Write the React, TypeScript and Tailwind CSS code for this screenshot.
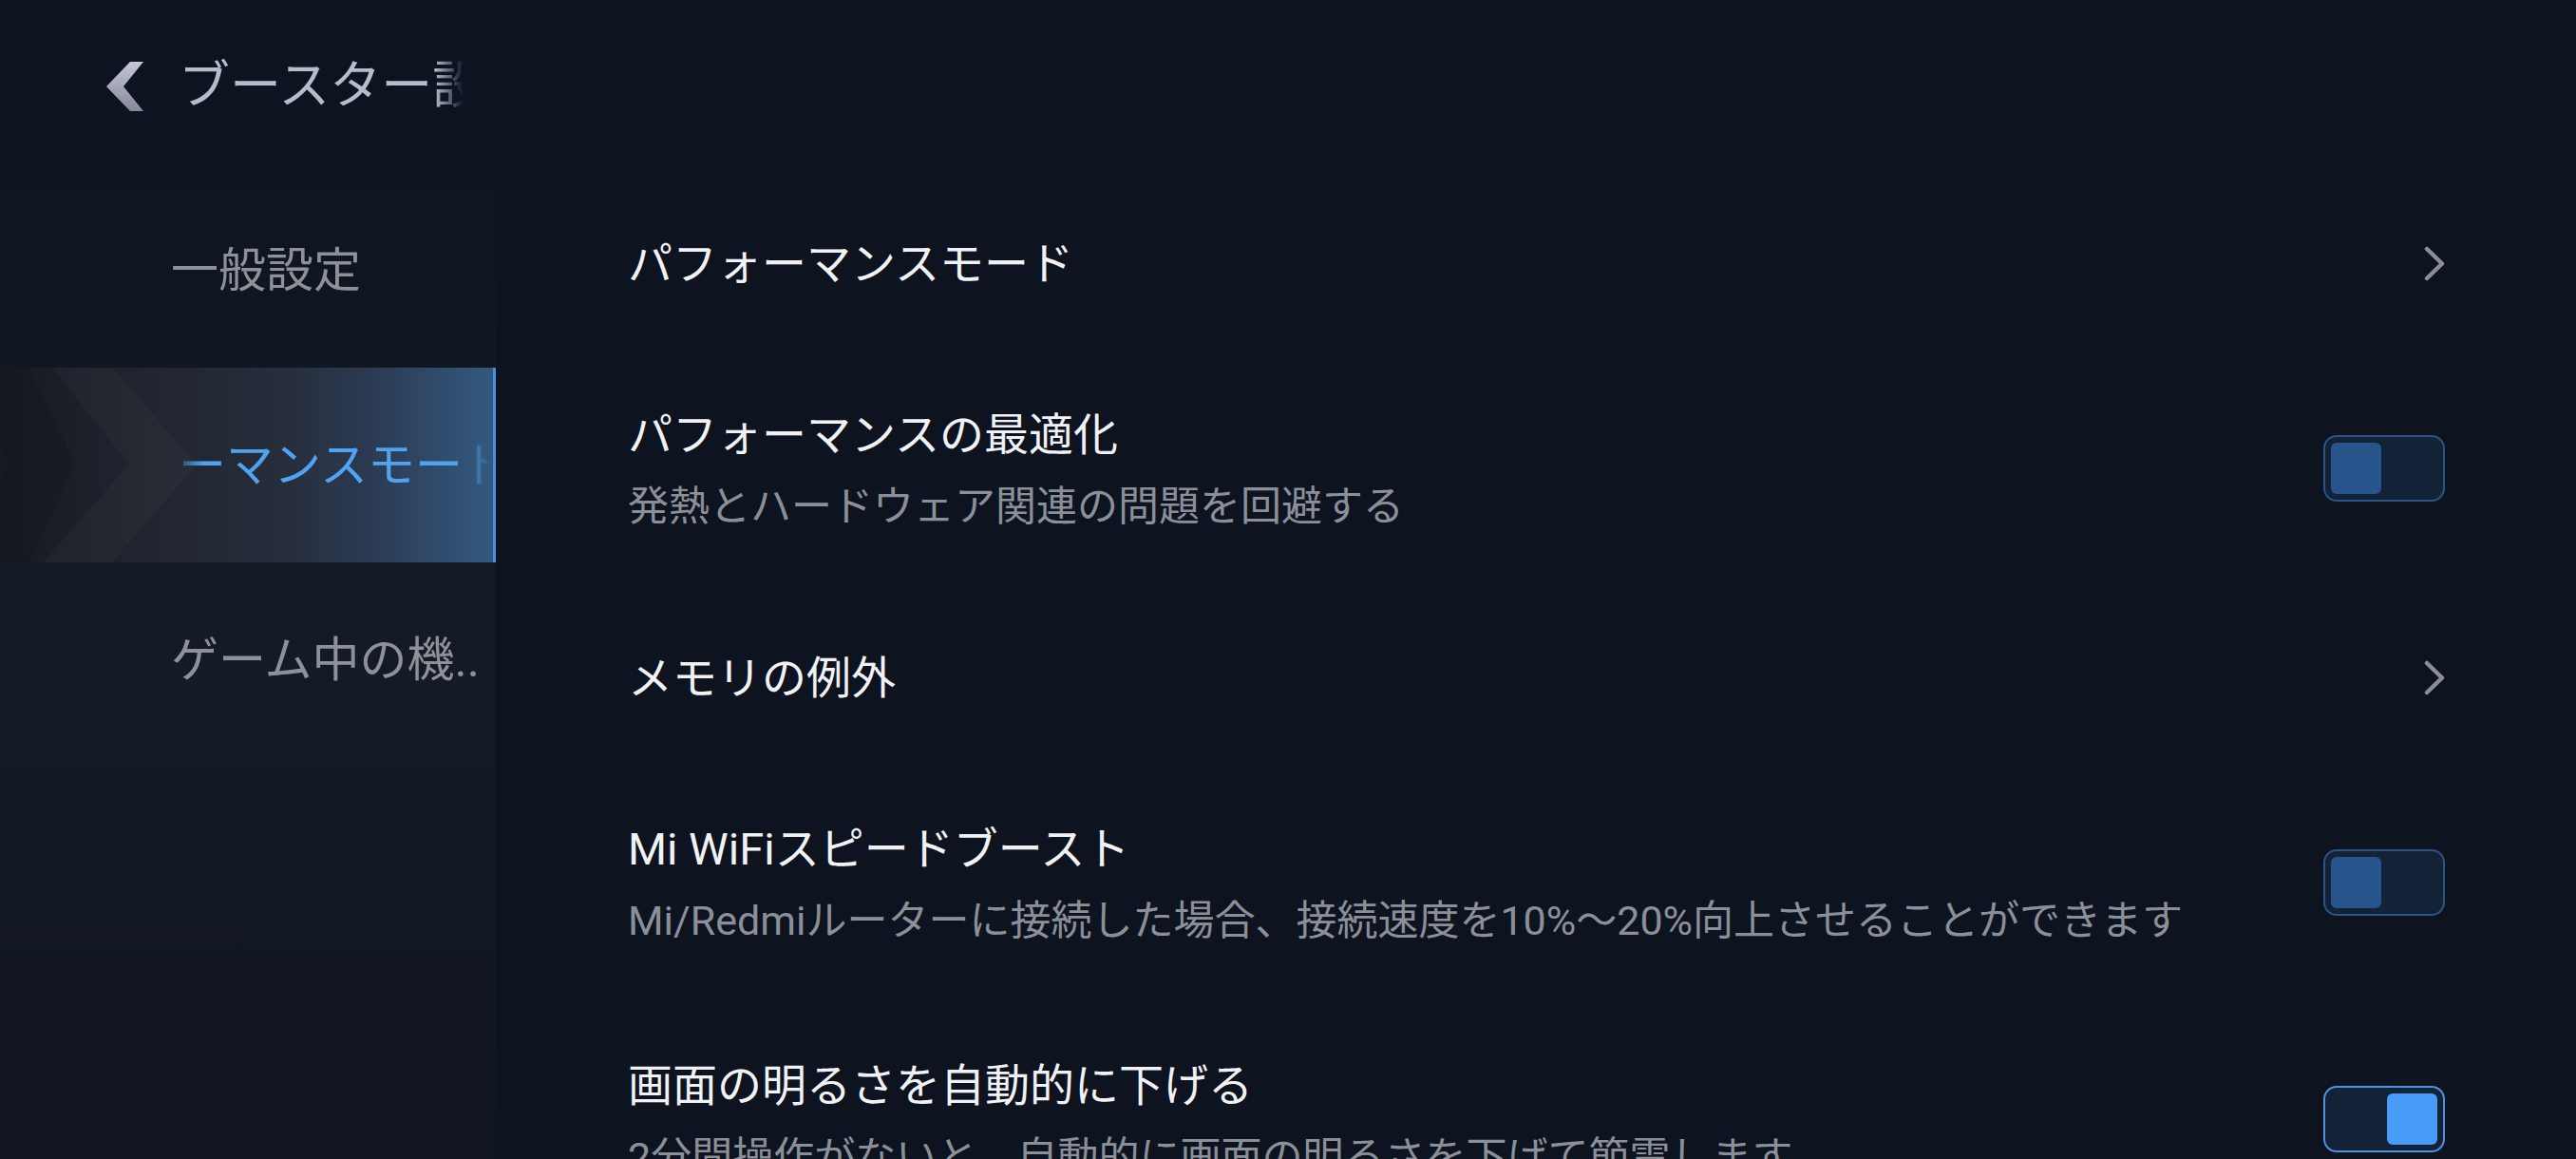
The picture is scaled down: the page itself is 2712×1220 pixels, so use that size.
import React from "react";

const FONT = "[font-family:Roboto,'Noto_Sans_CJK_JP',sans-serif]";

function BackChevron() {
  return (
    <svg width="40" height="52" viewBox="0 0 40 52" className="shrink-0">
      <defs>
        <linearGradient id="bk" x1="0" y1="0" x2="0" y2="1">
          <stop offset="0" stopColor="#c4c7d9" />
          <stop offset="1" stopColor="#848899" />
        </linearGradient>
      </defs>
      <polygon points="25,0 39,0 18,26 39,52 25,52 0,26" fill="url(#bk)" />
    </svg>
  );
}

function RowChevron() {
  return (
    <svg width="22" height="37" viewBox="0 0 22 37" className="shrink-0">
      <path
        d="M3 3 L19 18.5 L3 34"
        fill="none"
        stroke="#8b8e95"
        strokeWidth="4.5"
        strokeLinecap="round"
        strokeLinejoin="round"
      />
    </svg>
  );
}

function Toggle({ on }: { on: boolean }) {
  return (
    <div
      className={
        on
          ? "w-[128px] h-[70px] shrink-0 rounded-[14px] border-2 border-[#4d93dd] bg-[#142238] p-[6px] flex justify-end"
          : "w-[128px] h-[70px] shrink-0 rounded-[14px] border-2 border-[#2b5384] bg-[#142238] p-[6px] flex justify-start"
      }
    >
      <div
        className={
          on
            ? "w-[53px] h-[54px] rounded-[6px] bg-[#469cf7]"
            : "w-[53px] h-[54px] rounded-[6px] bg-[#27548a]"
        }
      />
    </div>
  );
}

function NavRow({ title }: { title: string }) {
  return (
    <div className="h-[187px] shrink-0 flex items-center justify-between">
      <div className="text-[47px] leading-[62px] text-[#f1f2f5] whitespace-nowrap">{title}</div>
      <RowChevron />
    </div>
  );
}

function ToggleRow({ title, sub, on }: { title: string; sub: string; on: boolean }) {
  return (
    <div className="h-[249px] flex items-center justify-between shrink-0">
      <div className="flex flex-col gap-[13px]">
        <div className="text-[47px] leading-[62px] text-[#f1f2f5] whitespace-nowrap">{title}</div>
        <div className="text-[43px] leading-[62px] text-[#8b8f98] whitespace-nowrap">{sub}</div>
      </div>
      <div className="-mt-[6px]">
        <Toggle on={on} />
      </div>
    </div>
  );
}

export default function App() {
  return (
    <div
      className={`w-[2712px] h-[1220px] overflow-hidden bg-[#0e1320] flex ${FONT}`}
    >
      <aside className="w-[522px] shrink-0 flex flex-col">
        <header className="h-[182px] shrink-0 flex items-center pl-[112px] gap-[36px]">
          <BackChevron />
          <div className="w-[300px] overflow-hidden [mask-image:linear-gradient(to_right,black_0,black_270px,transparent_300px)]">
            <span className="block whitespace-nowrap text-[54px] leading-[70px] text-[#b7bbcd]">
              ブースター設定
            </span>
          </div>
        </header>
        <div className="flex-1 flex flex-col bg-gradient-to-b from-[#0f1421] via-[#141a26] to-[#10151f]">
          <div className="h-[205px] shrink-0 flex items-center pl-[180px]">
            <span className="text-[50px] leading-[64px] text-[#8e9198] whitespace-nowrap">
              一般設定
            </span>
          </div>
          <div className="relative h-[205px] shrink-0 flex items-center pl-[180px] overflow-hidden bg-[linear-gradient(90deg,#161a23_0%,#20252f_30%,#262c39_55%,#2b3a52_75%,#34597f_100%)] border-r-[3px] border-[#4b8fd8]">
            <svg
              className="absolute left-0 top-0"
              width="240"
              height="205"
              viewBox="0 0 240 205"
            >
              <polygon points="-40,0 30,0 80,102 30,205 -40,205 10,102" fill="#0b0e15" fillOpacity="0.18" />
              <polygon points="55,0 118,0 207,102 118,205 45,205 136,102" fill="#ffffff" fillOpacity="0.025" />
            </svg>
            <div className="relative w-[336px] overflow-hidden [mask-image:linear-gradient(to_right,transparent_0,black_34px,black_306px,transparent_336px)]">
              <span className="block whitespace-nowrap ml-[-142px] text-[50px] leading-[64px] text-[#4fa3f0]">
                パフォーマンスモード
              </span>
            </div>
          </div>
          <div className="h-[205px] shrink-0 flex items-center pl-[180px]">
            <span className="text-[50px] leading-[64px] text-[#8e9198] whitespace-nowrap">
              ゲーム中の機..
            </span>
          </div>
        </div>
      </aside>
      <main className="flex-1 flex flex-col overflow-hidden pt-[184px] pl-[139px] pr-[138px]">
        <NavRow title="パフォーマンスモード" />
        <ToggleRow
          title="パフォーマンスの最適化"
          sub="発熱とハードウェア関連の問題を回避する"
          on={false}
        />
        <NavRow title="メモリの例外" />
        <ToggleRow
          title="Mi WiFiスピードブースト"
          sub="Mi/Redmiルーターに接続した場合、接続速度を10%～20%向上させることができます"
          on={false}
        />
        <ToggleRow
          title="画面の明るさを自動的に下げる"
          sub="2分間操作がないと、自動的に画面の明るさを下げて節電します"
          on={true}
        />
      </main>
    </div>
  );
}
